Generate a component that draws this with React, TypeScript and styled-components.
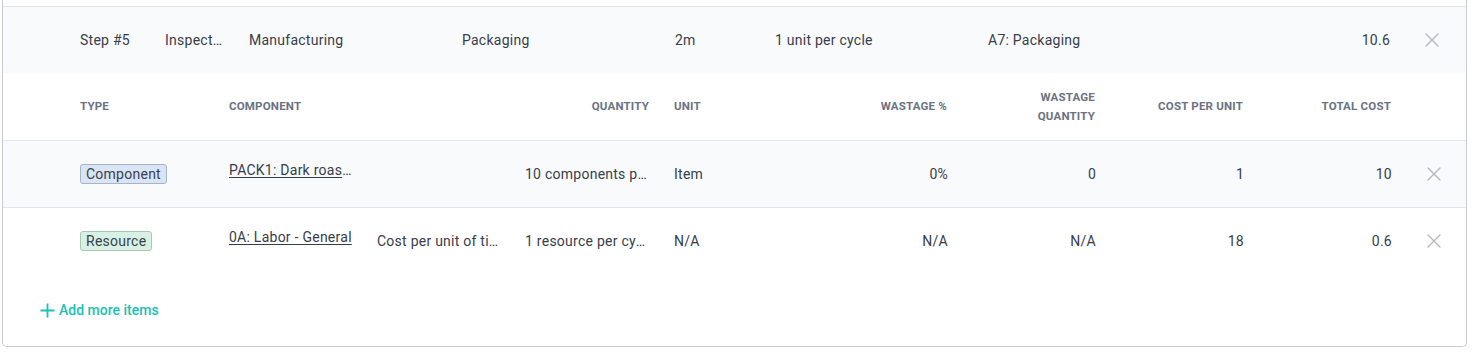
import React from 'react';
import styled, { createGlobalStyle } from 'styled-components';

const GlobalStyle = createGlobalStyle`
    body {
        margin: 0;
        background: #ffffff;
        font-family: Roboto, 'Liberation Sans', sans-serif;
        color: #383d4a;
    }
`;

const STEP_COLS = '85px 84px 213px 213px 100px 213px 213px 213px 36px';
const ITEM_COLS = '149px 148px 148px 149px 149px 149px 148px 148px 148px 36px';

type Item = {
    type: 'Component' | 'Resource';
    name: string;
    description?: string;
    quantity: string;
    unit: string;
    wastage: string;
    wastageQty: string;
    costPerUnit: string;
    totalCost: string;
};

const items: Item[] = [
    {
        type: 'Component',
        name: 'PACK1: Dark roast coffee bag 250g',
        quantity: '10 components per cycle',
        unit: 'Item',
        wastage: '0%',
        wastageQty: '0',
        costPerUnit: '1',
        totalCost: '10',
    },
    {
        type: 'Resource',
        name: '0A: Labor - General',
        description: 'Cost per unit of time',
        quantity: '1 resource per cycle',
        unit: 'N/A',
        wastage: 'N/A',
        wastageQty: 'N/A',
        costPerUnit: '18',
        totalCost: '0.6',
    },
];

const CloseIcon = () => (
    <svg width="14" height="14" viewBox="0 0 14 14" fill="none">
        <path d="M1 1L13 13M13 1L1 13" stroke="#b5b7bc" strokeWidth="1.4" strokeLinecap="round" />
    </svg>
);

const PlusIcon = () => (
    <svg width="15" height="15" viewBox="0 0 15 15" fill="none">
        <path d="M7.5 0.5V14.5M0.5 7.5H14.5" stroke="#19c2b3" strokeWidth="1.8" />
    </svg>
);

const App = () => {
    return (
        <>
            <GlobalStyle />
            <Card>
                <StepRow>
                    <Cell>Step #5</Cell>
                    <Cell>Inspection and packing</Cell>
                    <Cell>Manufacturing</Cell>
                    <Cell>Packaging</Cell>
                    <Cell>2m</Cell>
                    <Cell>1 unit per cycle</Cell>
                    <Cell>A7: Packaging</Cell>
                    <Cell $right>10.6</Cell>
                    <RemoveButton aria-label="Remove step">
                        <CloseIcon />
                    </RemoveButton>
                </StepRow>

                <HeaderRow>
                    <HeadCell>TYPE</HeadCell>
                    <HeadCell>COMPONENT</HeadCell>
                    <HeadCell />
                    <HeadCell $right>QUANTITY</HeadCell>
                    <HeadCell>UNIT</HeadCell>
                    <HeadCell $right>WASTAGE %</HeadCell>
                    <HeadCell $right>
                        <HeadLabel>WASTAGE QUANTITY</HeadLabel>
                    </HeadCell>
                    <HeadCell $right>COST PER UNIT</HeadCell>
                    <HeadCell $right>TOTAL COST</HeadCell>
                    <span />
                </HeaderRow>

                {items.map((item, i) => (
                    <ItemRow key={item.name} $shaded={i % 2 === 0}>
                        <Cell>
                            <Tag $kind={item.type}>{item.type}</Tag>
                        </Cell>
                        <LinkCell>
                            <ItemLink href="#">{item.name}</ItemLink>
                        </LinkCell>
                        <Cell>{item.description}</Cell>
                        <Cell>{item.quantity}</Cell>
                        <Cell>{item.unit}</Cell>
                        <Cell $right>{item.wastage}</Cell>
                        <Cell $right>{item.wastageQty}</Cell>
                        <Cell $right>{item.costPerUnit}</Cell>
                        <Cell $right>{item.totalCost}</Cell>
                        <RemoveButton aria-label="Remove item">
                            <CloseIcon />
                        </RemoveButton>
                    </ItemRow>
                ))}

                <Footer>
                    <AddButton>
                        <PlusIcon />
                        Add more items
                    </AddButton>
                </Footer>
            </Card>
        </>
    );
};

const Card = styled.section`
    width: 1465px;
    margin-left: 2px;
    box-sizing: border-box;
    border: 1px solid #c9ccd8;
    border-top: none;
    border-radius: 0 0 5px 5px;
    padding-top: 6px;
    background: #ffffff;
`;

const StepRow = styled.div`
    display: grid;
    grid-template-columns: ${STEP_COLS};
    align-items: center;
    height: 66px;
    padding-left: 77px;
    border-top: 1px solid #e3e5ea;
    background: #f9fafc;
    font-size: 14px;
    letter-spacing: 0.25px;
`;

const HeaderRow = styled.div`
    display: grid;
    grid-template-columns: ${ITEM_COLS};
    align-items: center;
    height: 67px;
    padding-left: 77px;
    border-bottom: 1px solid #e3e5ea;
`;

const ItemRow = styled.div<{ $shaded: boolean }>`
    display: grid;
    grid-template-columns: ${ITEM_COLS};
    align-items: center;
    height: 66px;
    padding-left: 77px;
    font-size: 14px;
    letter-spacing: 0.25px;
    background: ${(p) => (p.$shaded ? '#f9fafc' : '#ffffff')};
    border-bottom: ${(p) => (p.$shaded ? '1px solid #e3e5ea' : 'none')};
`;

const Cell = styled.div<{ $right?: boolean }>`
    padding-right: 24px;
    min-width: 0;
    white-space: nowrap;
    overflow: hidden;
    text-overflow: ellipsis;
    text-align: ${(p) => (p.$right ? 'right' : 'left')};
    line-height: 20px;
`;

const LinkCell = styled(Cell)`
    padding-bottom: 8px;
    line-height: 22px;
`;

const HeadCell = styled.div<{ $right?: boolean }>`
    padding-right: 25px;
    font-size: 11.5px;
    font-weight: 700;
    letter-spacing: 0.2px;
    color: #6b7283;
    line-height: 19px;
    text-align: ${(p) => (p.$right ? 'right' : 'left')};
`;

const HeadLabel = styled.span`
    display: inline-block;
    max-width: 84px;
`;

const Tag = styled.span<{ $kind: 'Component' | 'Resource' }>`
    display: inline-block;
    padding: 0 5px;
    line-height: 18px;
    border-radius: 3px;
    border: 1px solid ${(p) => (p.$kind === 'Component' ? '#a8b3c7' : '#a9c6b6')};
    background: ${(p) => (p.$kind === 'Component' ? '#d9e4f5' : '#d7f2e4')};
    color: #3a3f4b;
`;

const ItemLink = styled.a`
    color: #383d4a;
    text-decoration: underline;
    text-underline-offset: 2px;
`;

const RemoveButton = styled.button`
    display: flex;
    align-items: center;
    justify-content: center;
    width: 36px;
    height: 20px;
    padding: 0;
    border: none;
    background: transparent;
    cursor: pointer;
`;

const Footer = styled.div`
    padding: 26px 37px 26px;
`;

const AddButton = styled.button`
    display: flex;
    align-items: center;
    gap: 4px;
    padding: 0;
    border: none;
    background: transparent;
    font-family: inherit;
    font-size: 14px;
    font-weight: 500;
    color: #19c2b3;
    cursor: pointer;
    line-height: 20px;
`;

export default App;
